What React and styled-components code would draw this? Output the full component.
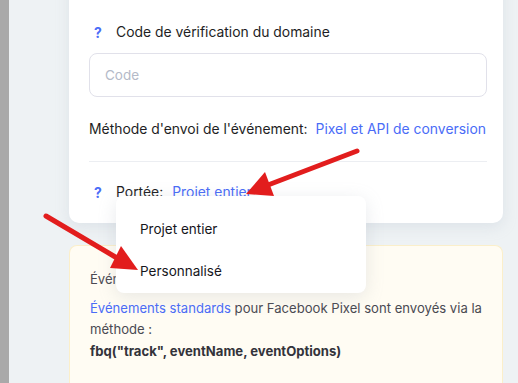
import React from "react";
import styled, { createGlobalStyle } from "styled-components";

const Global = createGlobalStyle`
  html, body { margin: 0; padding: 0; }
  body {
    background: #eef2f4;
    font-family: Inter, "Noto Sans", "Liberation Sans", sans-serif;
    overflow: hidden;
  }
  * { box-sizing: border-box; }
`;

const Page = styled.div`
  position: relative;
  display: flex;
  width: 518px;
  height: 383px;
  overflow: hidden;
`;

const Strip = styled.div`
  width: 9px;
  flex: none;
  background: #a9a9a9;
`;

const Main = styled.div`
  flex: 1;
  min-width: 0;
  display: flex;
  flex-direction: column;
  gap: 22px;
  padding: 0 15px 0 60px;
`;

const Card = styled.div`
  margin-top: -40px;
  background: #fff;
  border-radius: 0 0 10px 10px;
  box-shadow: 0 4px 14px rgba(170, 185, 200, 0.25);
  padding: 0 16px 0 20px;
  display: flex;
  flex-direction: column;
  min-width: 0;
`;

const PrevInput = styled.div`
  height: 40px;
  border: 1px solid #e3e3ec;
  border-top: none;
  border-radius: 0 0 8px 8px;
  margin-right: 5px;
`;

const LabelRow = styled.div`
  display: flex;
  align-items: center;
  height: 20px;
  margin-top: ${(p) => p.$mt}px;
  font-size: 13.9px;
  color: #1e1e24;
  white-space: nowrap;
  position: relative;
`;

const Help = styled.span`
  width: 27px;
  padding-left: 5px;
  color: #4a6cf7;
  font-weight: 700;
  font-size: 14px;
`;

const Input = styled.div`
  margin-top: 11px;
  height: 44px;
  border: 1px solid #e1e1ea;
  border-radius: 8px;
  padding-left: 15px;
  display: flex;
  align-items: center;
  font-size: 13.5px;
  color: #b4bac8;
`;

const Link = styled.span`
  color: #4a6cf7;
  margin-left: ${(p) => p.$ml || 0}px;
`;

const Divider = styled.div`
  margin-top: 22px;
  height: 1px;
  background: #eceef2;
`;

const CardBottom = styled.div`
  height: 21px;
`;

const Menu = styled.div`
  position: absolute;
  left: 27px;
  top: 14px;
  width: 250px;
  height: 97px;
  background: #fff;
  border-radius: 8px;
  box-shadow: 0 4px 18px rgba(150, 160, 175, 0.22);
  padding-top: 12px;
  z-index: 5;
`;

const MenuItem = styled.div`
  height: 42px;
  display: flex;
  align-items: center;
  padding-left: 24px;
  font-size: 13.5px;
  color: #16161c;
`;

const Notice = styled.div`
  background: #fffcf3;
  border: 1px solid #fbefca;
  border-bottom: none;
  border-radius: 8px 8px 0 0;
  padding: 23px 19px 40px 20px;
  font-size: 13.1px;
  color: #4a4a52;
  line-height: 21.5px;
`;

const NoticeTitle = styled.div`
  margin-bottom: 7px;
`;

const Code = styled.div`
  font-weight: 700;
  color: #33333a;
`;

const Arrows = styled.svg`
  position: absolute;
  left: 0;
  top: 0;
  pointer-events: none;
  z-index: 10;
`;

export default function App() {
  return (
    <>
      <Global />
      <Page>
        <Strip />
        <Main>
          <Card>
            <PrevInput />
            <LabelRow $mt={22}>
              <Help>?</Help>
              Code de vérification du domaine
            </LabelRow>
            <Input>Code</Input>
            <LabelRow $mt={22}>
              Méthode d'envoi de l'événement:
              <Link $ml={8}>Pixel et API de conversion</Link>
            </LabelRow>
            <Divider />
            <LabelRow $mt={20}>
              <Help>?</Help>
              Portée:
              <Link $ml={9}>Projet entier</Link>
              <Menu>
                <MenuItem>Projet entier</MenuItem>
                <MenuItem>Personnalisé</MenuItem>
              </Menu>
            </LabelRow>
            <CardBottom />
          </Card>
          <Notice>
            <NoticeTitle>Événements</NoticeTitle>
            <div>
              <Link>Événements standards</Link> pour Facebook Pixel sont envoyés via la méthode :
            </div>
            <Code>fbq("track", eventName, eventOptions)</Code>
          </Notice>
        </Main>
        <Arrows width="518" height="383" viewBox="0 0 518 383">
          <line x1="357" y1="151" x2="268" y2="185" stroke="#e21d1d" strokeWidth="5" strokeLinecap="round" />
          <polygon points="246,194 265,172 274,196" fill="#e21d1d" />
          <line x1="46" y1="216" x2="117" y2="258" stroke="#e21d1d" strokeWidth="5" strokeLinecap="round" />
          <polygon points="138,270 121,246 110,268" fill="#e21d1d" />
        </Arrows>
      </Page>
    </>
  );
}
